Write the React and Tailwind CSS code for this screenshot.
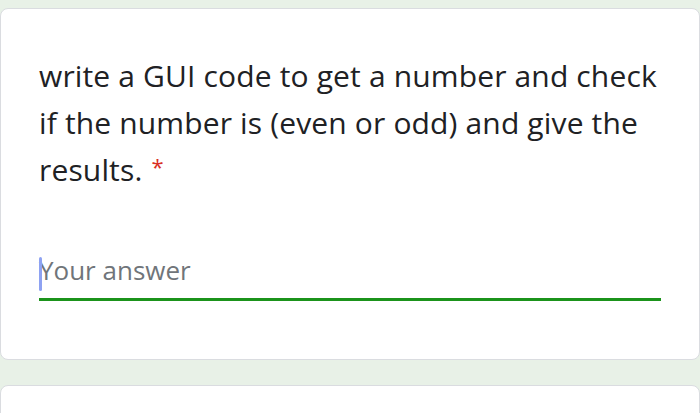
import React from 'react';

export default function App() {
  return (
    <div
      className="flex h-[413px] w-[700px] flex-col gap-[25px] overflow-hidden bg-[#e8f1e7] pt-[8px]"
      style={{ fontFamily: '"Open Sans", "Liberation Sans", sans-serif' }}
    >
      <div className="shrink-0 rounded-[8px] border border-[#dadce0] bg-white px-[38px] pb-[58px] pt-[43px]">
        <div className="text-[30px] leading-[47px] tracking-[0.15px] text-[#202124]">
          write a GUI code to get a number and check
          <br />
          if the number is (even or odd) and give the
          <br />
          results.
          <span className="relative top-[-6px] ml-[9px] text-[22px] text-[#d93025]">*</span>
        </div>
        <div className="pt-[57px]">
          <div className="relative flex h-[48px] items-center border-b-[3px] border-[#1b931b]">
            <span className="absolute left-0 top-[4px] h-[34px] w-[3px] rounded-full bg-[#8ea2f2]" />
            <span className="mb-[10px] text-[26px] text-[#70757a]">Your answer</span>
          </div>
        </div>
      </div>
      <div className="h-[60px] shrink-0 rounded-[8px] border border-[#dadce0] bg-white" />
    </div>
  );
}
